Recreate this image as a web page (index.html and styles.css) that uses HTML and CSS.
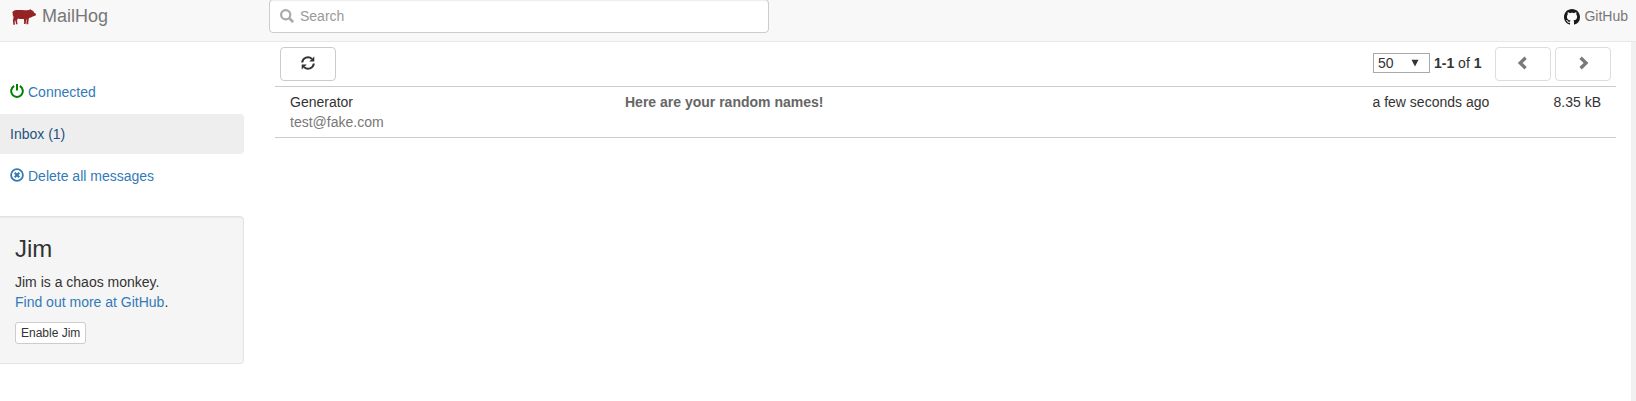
FILE: index.html
```html
<!DOCTYPE html>
<html lang="en">
<head>
<meta charset="utf-8">
<title>MailHog</title>
<link rel="stylesheet" href="styles.css">
</head>
<body>
<nav class="navbar">
  <a class="brand">
    <svg class="hog" viewBox="0 0 24 16"><path d="M.3 3.600C.9 2 2.300 1.200 4.500 1.100 8 .7 12 1.600 17 .9L18.600.2l.7.9c1.500.5 2.300 1.400 2.900 2.700l1.700.9-.2 1.900-2.900 1c-1.300.8-2.500 1.100-3.800 1.500-.3 1-.5 1.700-.5 2.600l-.3 3.600h-1.800l.2-4.800-.5 0-.2 3.400-.7 1.100h-1.400l.4-1.300-.3-3.700c-2.300.2-4.500 0-5.900-.6L5 11.200l.5 4H4.100L3.200 11.200l-.6 1 .4 3.600H1.400L.9 11.500 1.600 8C.8 6.600.6 5.500.8 4.400z"/></svg>
    <span>MailHog</span>
  </a>
  <div class="search">
    <svg class="icon" viewBox="0 0 14 14"><circle cx="5.700" cy="5.700" r="4.600" fill="none" stroke="currentColor" stroke-width="2.200"/><path d="M8.900 8.900L13.100 13.100" stroke="currentColor" stroke-width="2.700"/></svg>
    <span>Search</span>
  </div>
  <a class="github">
    <svg viewBox="0 0 16 16"><path d="M8 0C3.580 0 0 3.580 0 8c0 3.540 2.290 6.530 5.470 7.590.4.070.55-.17.55-.38 0-.19-.01-.82-.01-1.490-2.010.37-2.530-.49-2.690-.94-.09-.23-.48-.94-.82-1.130-.28-.15-.68-.52-.01-.53.63-.01 1.080.58 1.230.82.72 1.210 1.870.87 2.330.66.070-.52.28-.87.51-1.070-1.780-.2-3.640-.89-3.640-3.950 0-.87.31-1.590.82-2.150-.08-.2-.36-1.020.08-2.120 0 0 .67-.21 2.200.82.64-.18 1.320-.27 2-.27s1.360.09 2 .27c1.530-1.040 2.200-.82 2.200-.82.44 1.100.16 1.920.08 2.120.51.56.82 1.270.82 2.150 0 3.070-1.870 3.750-3.650 3.950.29.25.54.73.54 1.480 0 1.070-.01 1.930-.01 2.200 0 .21.15.46.55.38A8 8 0 0 0 16 8c0-4.420-3.580-8-8-8z"/></svg>
    <span>GitHub</span>
  </a>
</nav>
<div class="page">
  <aside class="sidebar">
    <a class="pill"><svg class="icon power" viewBox="0 0 14 14"><path d="M4.200 2A5.800 5.800 0 1 0 9.800 2" fill="none" stroke="currentColor" stroke-width="2"/><path d="M7 0v6.500" stroke="currentColor" stroke-width="2"/></svg><span>Connected</span></a>
    <a class="pill active">Inbox (1)</a>
    <a class="pill"><svg class="icon" viewBox="0 0 14 14"><circle cx="7" cy="7" r="5.900" fill="none" stroke="currentColor" stroke-width="1.800"/><path d="M4.700 4.700l4.600 4.600M9.300 4.700L4.700 9.300" stroke="currentColor" stroke-width="2.100"/></svg><span>Delete all messages</span></a>
    <section class="well">
      <h3>Jim</h3>
      <p>Jim is a chaos monkey.<br><a>Find out more at GitHub</a>.</p>
      <button class="btn-xs">Enable Jim</button>
    </section>
  </aside>
  <main class="content">
    <div class="toolbar">
      <button class="btn"><svg class="icon" viewBox="0 0 14 14"><path d="M1.200 6.500A5.700 5.700 0 0 1 10.900 2.900M12.800 7.500A5.700 5.700 0 0 1 3.100 11.100" fill="none" stroke="currentColor" stroke-width="2"/><path d="M13.300.4v5.100H8.200zM.7 13.600V8.500h5.100z" fill="currentColor"/></svg></button>
      <div class="pager">
        <div class="select"><span>50</span><svg viewBox="0 0 8 8"><path d="M.5 .7h7L4 7.500z"/></svg></div>
        <span class="range"><b>1-1</b> of <b>1</b></span>
        <button class="btn disabled"><svg class="icon" viewBox="0 0 14 14"><path d="M9.600 1.800L4.200 7l5.400 5.200" fill="none" stroke="currentColor" stroke-width="3.300"/></svg></button>
        <button class="btn disabled"><svg class="icon" viewBox="0 0 14 14"><path d="M4.600 1.800L10 7l-5.400 5.200" fill="none" stroke="currentColor" stroke-width="3.300"/></svg></button>
      </div>
    </div>
    <div class="message">
      <div>Generator<br><span class="address">test@fake.com</span></div>
      <div class="subject">Here are your random names!</div>
      <div>a few seconds ago</div>
      <div class="size">8.35 kB</div>
    </div>
  </main>
  <div class="scrollbar"></div>
</div>
</body>
</html>
```
FILE: styles.css
```css
* { box-sizing: border-box; }
body {
  margin: 0;
  height: 401px;
  overflow: hidden;
  background: #fff;
  color: #333;
  font: 14px/20px "Liberation Sans", Arial, sans-serif;
}
.icon { width: 14px; height: 14px; display: block; flex: none; }
.navbar {
  display: flex;
  height: 42px;
  background: #f8f8f8;
  border-bottom: 1px solid #e7e7e7;
  color: #777;
}
.brand {
  display: flex;
  width: 269px;
  height: 32px;
  padding-left: 12px;
  gap: 6px;
  align-items: center;
  font-size: 18px;
}
.hog { width: 24px; height: 16px; margin-top: 2px; fill: #952225; overflow: visible; }
.search {
  display: flex;
  align-items: center;
  gap: 6px;
  width: 500px;
  height: 34px;
  margin-top: -1px;
  padding-left: 10px;
  border: 1px solid #ccc;
  border-radius: 4px;
  background: #fff;
  box-shadow: inset 0 1px 1px rgba(0, 0, 0, .075);
  color: #999;
}
.search .icon { color: #aaa; }
.github {
  display: flex;
  height: 32px;
  align-items: center;
  gap: 4px;
  margin-left: auto;
  padding-right: 8px;
}
.github svg { width: 16px; height: 16px; margin-top: 2px; fill: #1b1817; }
.page { display: flex; height: 359px; }
.sidebar { width: 244px; padding-top: 30px; flex: none; }
.pill {
  display: flex;
  align-items: center;
  gap: 4px;
  height: 40px;
  margin-bottom: 2px;
  padding-left: 10px;
  color: #337ab7;
}
.pill .icon { margin-top: -2px; }
.pill .power { color: #008000; }
.active { background: #eee; color: #23527c; border-radius: 0 4px 4px 0; }
.well {
  height: 148px;
  margin: 20px 0 0 -5px;
  padding: 19px;
  background: #f5f5f5;
  border: 1px solid #e3e3e3;
  border-radius: 4px;
  box-shadow: inset 0 1px 1px rgba(0, 0, 0, .05);
}
.well h3 { margin: 0 0 10px; font-size: 24px; font-weight: 500; line-height: 26px; }
.well p { margin: 0 0 10px; }
.well a { color: #337ab7; }
.btn-xs {
  display: block;
  height: 22px;
  padding: 1px 5px;
  background: #fff;
  border: 1px solid #ccc;
  border-radius: 3px;
  color: #333;
  font: 12px/18px "Liberation Sans", Arial, sans-serif;
}
.content { margin-left: 31px; width: 1341px; flex: none; }
.toolbar { display: flex; justify-content: space-between; padding: 5px; height: 44px; }
.btn {
  display: flex;
  align-items: center;
  justify-content: center;
  width: 56px;
  height: 34px;
  padding: 0 1px 2px 0;
  background: #fff;
  border: 1px solid #ccc;
  border-radius: 4px;
  color: #333;
}
.disabled { opacity: .65; }
.pager { display: flex; gap: 4px; }
.select {
  display: flex;
  align-items: center;
  justify-content: space-between;
  width: 57px;
  height: 20px;
  margin-top: 6px;
  padding: 0 10px 0 4px;
  border: 1px solid #a9a9a9;
}
.select svg { width: 8px; height: 8px; fill: #333; }
.range { width: 57px; padding-top: 6px; white-space: nowrap; }
.message {
  display: grid;
  grid-template-columns: 335px 747.5px 1fr auto;
  height: 52px;
  padding: 5px 15px;
  border: solid #ccc;
  border-width: 1px 0;
}
.address { color: #777; }
.subject { color: #666; font-weight: bold; }
.scrollbar { width: 5px; margin-left: auto; background: #f1f1f1; }
```
